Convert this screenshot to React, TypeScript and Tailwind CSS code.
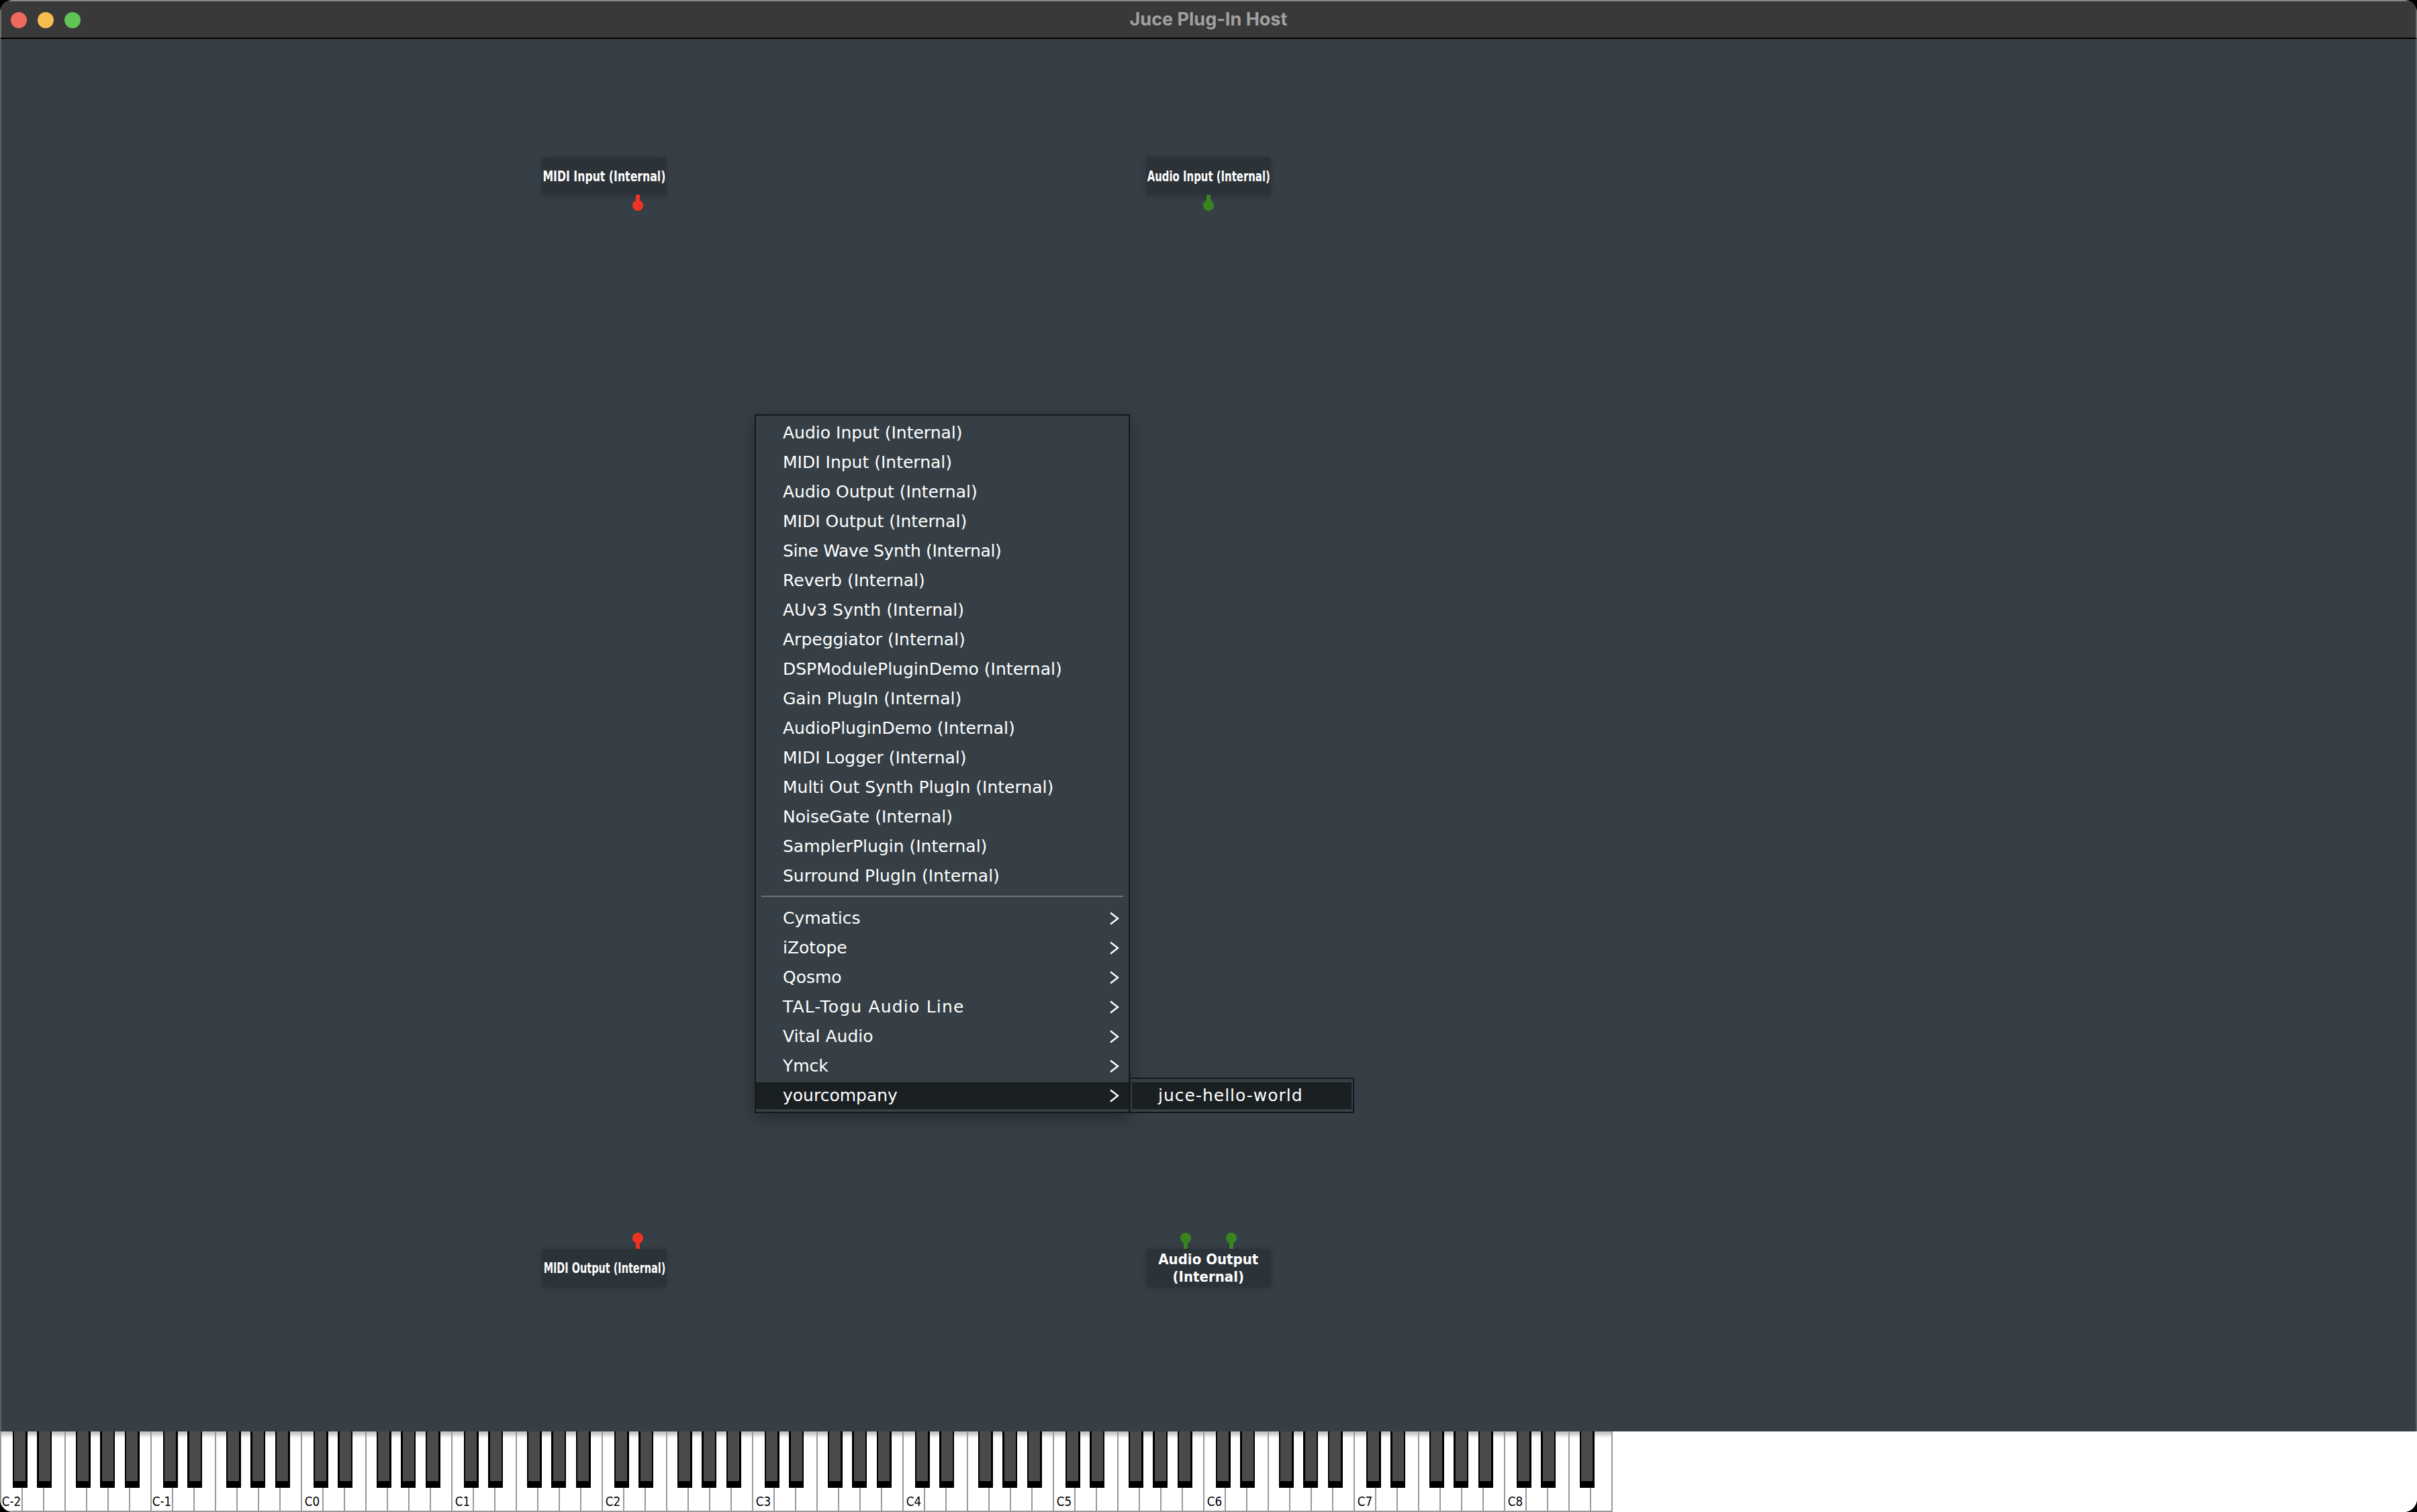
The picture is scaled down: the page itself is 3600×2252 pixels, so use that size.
import React from 'react';

const internalItems = [
  'Audio Input (Internal)',
  'MIDI Input (Internal)',
  'Audio Output (Internal)',
  'MIDI Output (Internal)',
  'Sine Wave Synth (Internal)',
  'Reverb (Internal)',
  'AUv3 Synth (Internal)',
  'Arpeggiator (Internal)',
  'DSPModulePluginDemo (Internal)',
  'Gain PlugIn (Internal)',
  'AudioPluginDemo (Internal)',
  'MIDI Logger (Internal)',
  'Multi Out Synth PlugIn (Internal)',
  'NoiseGate (Internal)',
  'SamplerPlugin (Internal)',
  'Surround PlugIn (Internal)',
];

const vendorItems = ['Cymatics', 'iZotope', 'Qosmo', 'TAL-Togu Audio Line', 'Vital Audio', 'Ymck'];

// white keys from C-2 up to G8
const whiteKeys = Array.from({ length: 75 }, (_, i) => i);

const blackOffsets = [18.5, 55, 112.5, 149, 185.5];
const blackKeys: number[] = [];
for (let octave = 0; octave < 11; octave++) {
  blackOffsets.forEach((off, i) => {
    if (octave === 10 && i > 2) return;
    blackKeys.push(octave * 224 + off);
  });
}

const Chevron = () => (
  <svg width="16" height="20" viewBox="0 0 16 20" className="shrink-0">
    <path d="M2 1.5 L13 10 L2 18.5" fill="none" stroke="#ffffff" strokeWidth="2.4" />
  </svg>
);

const Pin = ({ color, down, className }: { color: string; down?: boolean; className: string }) => (
  <svg width="16" height="24" viewBox="0 0 16 24" className={`absolute ${className}`}>
    {down ? (
      <>
        <rect x="5" y="0" width="6" height="12" fill={color} />
        <circle cx="8" cy="16" r="8" fill={color} />
      </>
    ) : (
      <>
        <circle cx="8" cy="8" r="8" fill={color} />
        <rect x="5" y="12" width="6" height="12" fill={color} />
      </>
    )}
  </svg>
);

const Node = ({ className, children }: { className: string; children: React.ReactNode }) => (
  <div className={`absolute flex h-[56px] w-[184px] items-center justify-center bg-[#2b3238] text-white font-bold shadow-[0_2px_8px_rgba(0,0,0,0.25)] ${className}`}>
    {children}
  </div>
);

const App = () => {
  return (
    <div className="h-[2252px] w-[3600px] overflow-hidden bg-black font-['DejaVu_Sans',sans-serif]">
      <div className="flex h-full flex-col overflow-hidden rounded-[20px] bg-white">
        {/* title bar */}
        <div className="relative flex h-[58px] shrink-0 items-center justify-center border-x-2 border-t-2 border-b-2 border-x-[#6f6f6f] border-t-[#8a8a8a] border-b-black bg-[#393939]">
          <div className="absolute left-[14px] top-[16px] flex gap-[16px]">
            <div className="h-[24px] w-[24px] rounded-full bg-[#ee6a5f]" />
            <div className="h-[24px] w-[24px] rounded-full bg-[#f5bd4f]" />
            <div className="h-[24px] w-[24px] rounded-full bg-[#61c454]" />
          </div>
          <span className="font-['Inter',sans-serif] text-[27px] font-bold text-[#a0a0a0]">Juce Plug-In Host</span>
        </div>

        {/* graph canvas */}
        <div className="relative flex-1 border-x-2 border-[#5a6268] bg-[#363f46]">
          <Node className="left-[806px] top-[176px]">
            <span className="text-[22px] whitespace-nowrap scale-x-[0.715]">MIDI Input (Internal)</span>
            <Pin color="#ee3322" down className="left-[134px] top-[56px]" />
          </Node>
          <Node className="left-[1706px] top-[176px]">
            <span className="text-[22px] whitespace-nowrap scale-x-[0.677]">Audio Input (Internal)</span>
            <Pin color="#3a8420" down className="left-[84px] top-[56px]" />
          </Node>
          <Node className="left-[806px] top-[1802px]">
            <span className="text-[22px] whitespace-nowrap scale-x-[0.656]">MIDI Output (Internal)</span>
            <Pin color="#ee3322" className="left-[134px] top-[-24px]" />
          </Node>
          <Node className="left-[1706px] top-[1802px]">
            <span className="whitespace-nowrap pt-[2px] text-center text-[22px] leading-[26px] scale-x-[0.9]">
              Audio Output
              <br />
              (Internal)
            </span>
            <Pin color="#3a8420" className="left-[50px] top-[-24px]" />
            <Pin color="#3a8420" className="left-[118px] top-[-24px]" />
          </Node>

          {/* popup menu */}
          <div className="absolute left-[1122px] top-[559px] flex w-[559px] flex-col border-2 border-[#15191c] bg-[#363f46] pb-[2px] pt-[4px] text-white shadow-[0_8px_24px_rgba(0,0,0,0.3)]">
            {internalItems.map((item) => (
              <div
                key={item}
                className={`flex h-[44px] items-center pl-[40px] text-[25px] whitespace-nowrap ${item.startsWith('Sine') ? 'tracking-[-0.35px]' : ''}`}
              >
                {item}
              </div>
            ))}
            <div className="mx-[8px] mb-[10px] mt-[7px] h-[2px] bg-[#70777c]" />
            {vendorItems.map((item) => (
              <div key={item} className="flex h-[44px] items-center justify-between pl-[40px] pr-[13px] text-[25px] whitespace-nowrap">
                <span className={item.startsWith('TAL') ? 'tracking-[1.2px]' : ''}>{item}</span>
                <Chevron />
              </div>
            ))}
            <div className="flex h-[44px] items-center py-[2px]">
              <div className="flex h-[40px] flex-1 items-center justify-between bg-[#1a1f22] pl-[40px] pr-[13px] text-[25px]">
                yourcompany
                <Chevron />
              </div>
            </div>
          </div>

          {/* submenu */}
          <div className="absolute left-[1680px] top-[1547px] flex h-[53px] w-[335px] items-end border-2 border-[#15191c] bg-[#363f46] px-[2px] pb-[4px] text-white">
            <div className="flex h-[40px] flex-1 items-center bg-[#1a1f22] pl-[39px] text-[25px] tracking-[1px]">juce-hello-world</div>
          </div>
        </div>

        {/* keyboard */}
        <div className="relative h-[120px] shrink-0 bg-white">
          <div className="flex h-full w-[2402px] border-b-2 border-r-2 border-[#999999] bg-white">
            {whiteKeys.map((k) => (
              <div key={k} className="relative h-full w-[32px] shrink-0 border-l-2 border-[#999999]">
                {k % 7 === 0 && (
                  <span className="absolute bottom-[2px] left-0 flex w-[30px] scale-x-[0.84] justify-center whitespace-nowrap text-[20px] leading-[24px] text-black">
                    {`C${k / 7 - 2}`}
                  </span>
                )}
              </div>
            ))}
          </div>
          <div className="absolute left-0 top-0 h-[10px] w-[2402px] bg-gradient-to-b from-[#9a9a9a] to-transparent opacity-70" />
          {blackKeys.map((x) => (
            <div key={x} className="absolute top-0 h-[84px] w-[22.4px] bg-black" style={{ left: x }}>
              <div className="mx-auto h-[74px] w-[17.4px] bg-[#4a4a4a]" />
            </div>
          ))}
        </div>
      </div>
    </div>
  );
};

export default App;
